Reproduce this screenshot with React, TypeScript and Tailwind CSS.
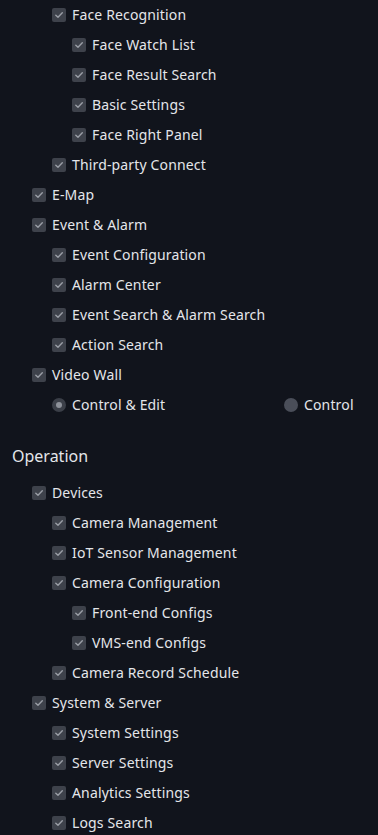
import React from "react";

type Item = { label: string; level: number };

const top: Item[] = [
  { label: "Face Recognition", level: 1 },
  { label: "Face Watch List", level: 2 },
  { label: "Face Result Search", level: 2 },
  { label: "Basic Settings", level: 2 },
  { label: "Face Right Panel", level: 2 },
  { label: "Third-party Connect", level: 1 },
  { label: "E-Map", level: 0 },
  { label: "Event & Alarm", level: 0 },
  { label: "Event Configuration", level: 1 },
  { label: "Alarm Center", level: 1 },
  { label: "Event Search & Alarm Search", level: 1 },
  { label: "Action Search", level: 1 },
  { label: "Video Wall", level: 0 },
];

const ops: Item[] = [
  { label: "Devices", level: 0 },
  { label: "Camera Management", level: 1 },
  { label: "IoT Sensor Management", level: 1 },
  { label: "Camera Configuration", level: 1 },
  { label: "Front-end Configs", level: 2 },
  { label: "VMS-end Configs", level: 2 },
  { label: "Camera Record Schedule", level: 1 },
  { label: "System & Server", level: 0 },
  { label: "System Settings", level: 1 },
  { label: "Server Settings", level: 1 },
  { label: "Analytics Settings", level: 1 },
  { label: "Logs Search", level: 1 },
];

const indent = ["pl-[32px]", "pl-[52px]", "pl-[72px]"];

function Check() {
  return (
    <span className="w-[14px] h-[14px] rounded-[2px] bg-[#3e424b] flex items-center justify-center shrink-0">
      <svg width="10" height="10" viewBox="0 0 10 10" fill="none">
        <path d="M1.8 5.2 L4 7.3 L8.3 2.8" stroke="#9a9ea6" strokeWidth="1.4" strokeLinecap="round" strokeLinejoin="round" />
      </svg>
    </span>
  );
}

function Row({ item }: { item: Item }) {
  return (
    <div className={`h-[30px] flex items-center gap-[6px] ${indent[item.level]}`}>
      <Check />
      <span className="text-[14px] text-[#e4e6ea] leading-none tracking-[0.15px]">{item.label}</span>
    </div>
  );
}

export default function App() {
  return (
    <div
      className="w-[378px] h-[835px] overflow-hidden bg-[#11141c]"
      style={{ fontFamily: '"Noto Sans", "Open Sans", sans-serif' }}
    >
      {top.map((it, i) => (
        <Row key={i} item={it} />
      ))}
      <div className="h-[30px] flex items-center pl-[52px]">
        <div className="flex items-center gap-[6px] w-[232px]">
          <span className="w-[14px] h-[14px] rounded-full bg-[#3b3f48] flex items-center justify-center">
            <span className="w-[6px] h-[6px] rounded-full bg-[#8d9199]" />
          </span>
          <span className="text-[14px] text-[#e4e6ea] leading-none tracking-[0.15px]">Control &amp; Edit</span>
        </div>
        <div className="flex items-center gap-[6px]">
          <span className="w-[14px] h-[14px] rounded-full bg-[#4a4e59]" />
          <span className="text-[14px] text-[#e4e6ea] leading-none tracking-[0.15px]">Control</span>
        </div>
      </div>
      <div className="h-[36px] mt-[18px] flex items-center pl-[12px]">
        <span className="text-[16px] text-[#e4e6ea] leading-none">Operation</span>
      </div>
      <div className="mt-[4px]">
        {ops.map((it, i) => (
          <Row key={i} item={it} />
        ))}
      </div>
    </div>
  );
}
